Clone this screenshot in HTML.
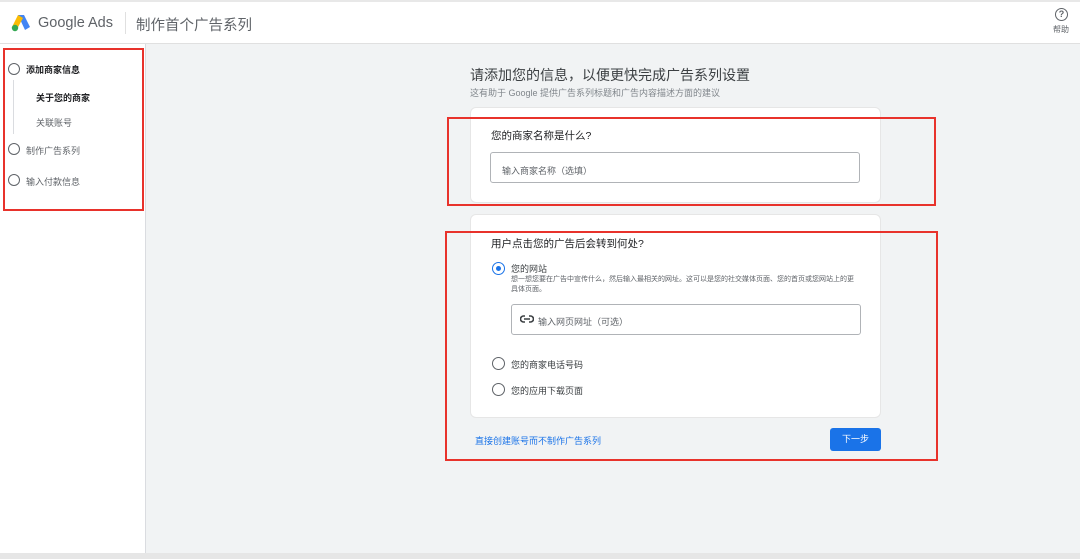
<!DOCTYPE html>
<html><head><meta charset="utf-8"><style>
*{margin:0;padding:0;box-sizing:border-box}
body{width:1080px;height:559px;overflow:hidden;background:#f1f3f4;font-family:"Liberation Sans","Noto Sans CJK SC",sans-serif;position:relative;color:#3c4043}
.a{position:absolute}
.hdr{left:0;top:0;width:1080px;height:44px;background:#fff;border-top:2px solid #e8e8e8;border-bottom:1px solid #e0e0e0}
.side{left:0;top:44px;width:146px;height:515px;background:#fff;border-right:1px solid #dadce0}
.red{border:2px solid #e8322b}
.circ{width:12px;height:12px;border:1.5px solid #5f6368;border-radius:50%}
.card{background:#fff;border-radius:6px;border:1px solid #e6e6e6}
.inp{border:1px solid #b0b3b7;border-radius:3px;background:#fff}
.t{font-size:9px;white-space:nowrap}
</style></head><body>
<div class="a hdr"></div>
<svg class="a" style="left:11px;top:14px" width="20" height="18" viewBox="0 0 20 18"><path d="M7 1 L13 1 L19 13 L14 16 Z" fill="#4285f4"/><path d="M7 1 L12 4 L6 15 L1 13 Z" fill="#fbbc04"/><circle cx="4" cy="14" r="3.2" fill="#34a853"/></svg>
<div class="a" style="left:38px;top:15px;font-size:14.5px;color:#5f6368">Google Ads</div>
<div class="a" style="left:125px;top:12px;width:1px;height:22px;background:#e0e0e0"></div>
<div class="a" style="left:136px;top:14px;font-size:14.5px;color:#5f6368">制作首个广告系列</div>
<div class="a" style="left:1055px;top:8px;width:13px;height:13px;border:1.5px solid #5f6368;border-radius:50%;font-size:9px;line-height:10px;text-align:center;color:#5f6368;font-weight:bold">?</div>
<div class="a" style="left:1053px;top:24px;font-size:8px;color:#5f6368">帮助</div>
<div class="a side"></div>
<div class="a" style="left:0;top:553px;width:1080px;height:6px;background:#e6e6e6"></div>
<div class="a red" style="left:3px;top:48px;width:141px;height:163px"></div>
<div class="a circ" style="left:8px;top:63px"></div>
<div class="a t" style="left:26px;top:63px;color:#202124;font-weight:bold">添加商家信息</div>
<div class="a" style="left:13px;top:80px;width:1px;height:54px;background:#dadce0"></div>
<div class="a t" style="left:36px;top:91px;color:#202124;font-weight:bold">关于您的商家</div>
<div class="a t" style="left:36px;top:116px;color:#5f6368">关联账号</div>
<div class="a circ" style="left:8px;top:143px"></div>
<div class="a t" style="left:26px;top:144px;color:#5f6368">制作广告系列</div>
<div class="a circ" style="left:8px;top:174px"></div>
<div class="a t" style="left:26px;top:175px;color:#5f6368">输入付款信息</div>

<div class="a" style="left:470px;top:65px;font-size:14px;color:#3c4043">请添加您的信息，以便更快完成广告系列设置</div>
<div class="a t" style="left:470px;top:86px;color:#80868b">这有助于 Google 提供广告系列标题和广告内容描述方面的建议</div>

<div class="a card" style="left:470px;top:107px;width:411px;height:96px"></div>
<div class="a" style="left:491px;top:128px;font-size:10.5px;color:#202124">您的商家名称是什么?</div>
<div class="a inp" style="left:490px;top:152px;width:370px;height:31px"></div>
<div class="a t" style="left:502px;top:164px;color:#5f6368">输入商家名称（选填）</div>
<div class="a red" style="left:447px;top:117px;width:489px;height:89px"></div>

<div class="a card" style="left:470px;top:214px;width:411px;height:204px"></div>
<div class="a" style="left:491px;top:236px;font-size:10.5px;color:#202124">用户点击您的广告后会转到何处?</div>
<div class="a" style="left:492px;top:262px;width:13px;height:13px;border:1.5px solid #1a73e8;border-radius:50%"><div style="margin:2.5px;width:5px;height:5px;border-radius:50%;background:#1a73e8"></div></div>
<div class="a t" style="left:511px;top:262px;color:#3c4043">您的网站</div>
<div class="a" style="left:511px;top:275px;font-size:7px;line-height:10px;color:#5f6368;width:345px">想一想您要在广告中宣传什么，然后输入最相关的网址。这可以是您的社交媒体页面、您的首页或您网站上的更具体页面。</div>
<div class="a inp" style="left:511px;top:304px;width:350px;height:31px"></div>
<svg class="a" style="left:520px;top:315px" width="14" height="8" viewBox="0 0 14 8"><path d="M5 1H3.5a3 3 0 0 0 0 6H5M9 1h1.5a3 3 0 0 1 0 6H9M4 4h6" stroke="#3c4043" stroke-width="1.6" fill="none"/></svg>
<div class="a t" style="left:538px;top:315px;color:#5f6368">输入网页网址（可选）</div>
<div class="a circ" style="left:492px;top:357px;width:13px;height:13px"></div>
<div class="a t" style="left:511px;top:358px">您的商家电话号码</div>
<div class="a circ" style="left:492px;top:383px;width:13px;height:13px"></div>
<div class="a t" style="left:511px;top:384px">您的应用下载页面</div>
<div class="a t" style="left:475px;top:434px;color:#1a73e8">直接创建账号而不制作广告系列</div>
<div class="a" style="left:830px;top:428px;width:51px;height:23px;background:#1a73e8;border-radius:3px;color:#fff;font-size:9px;text-align:center;line-height:23px">下一步</div>
<div class="a red" style="left:445px;top:231px;width:493px;height:230px"></div>
</body></html>
